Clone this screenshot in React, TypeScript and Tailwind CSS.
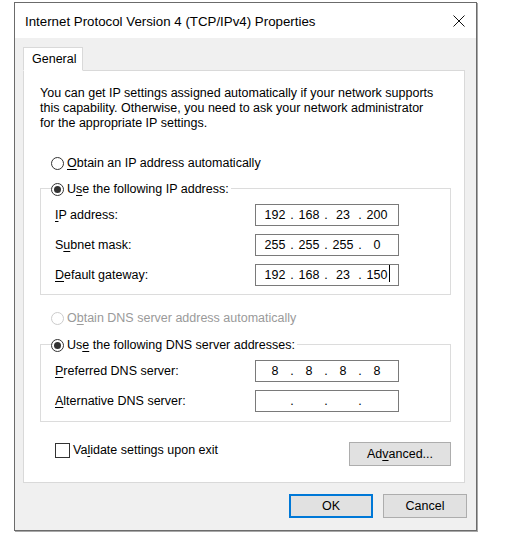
import React from 'react';

const font = { fontFamily: '"Liberation Sans", Arial, sans-serif' };

// Access-key letter, underlined like the Win32 dialog labels.
const U: React.FC<{ children: React.ReactNode }> = ({ children }) => <span className="underline underline-offset-[1.5px]">{children}</span>;

const Radio: React.FC<{ checked?: boolean; disabled?: boolean }> = ({ checked, disabled }) => (
  <span
    className={`flex h-[13px] w-[13px] shrink-0 items-center justify-center rounded-full border bg-white ${
      disabled ? 'border-[#cccccc]' : 'border-[#333333]'
    }`}
  >
    {checked && <span className="h-[7px] w-[7px] rounded-full bg-[#333333]" />}
  </span>
);

const IpBox: React.FC<{ parts: string[]; caret?: boolean }> = ({ parts, caret }) => (
  <div className="flex h-[22px] w-[144px] items-center border border-[#7a7a7a] bg-white pl-[5px] text-[12.5px] text-black">
    {parts.map((p, i) => (
      <React.Fragment key={i}>
        {i > 0 && <span className="w-[6px] text-center">.</span>}
        <span className="relative w-[28px] text-center">
          {p}
          {caret && i === 3 && <span className="absolute right-[1px] top-[-1px] h-[17px] w-px bg-black" />}
        </span>
      </React.Fragment>
    ))}
  </div>
);

const Field: React.FC<{ label: React.ReactNode; parts: string[]; caret?: boolean }> = ({ label, parts, caret }) => (
  <div className="flex h-[22px] items-center">
    <div className="w-[200px] text-[12.5px] text-black">{label}</div>
    <IpBox parts={parts} caret={caret} />
  </div>
);

const Group: React.FC<{ legend: React.ReactNode; children: React.ReactNode; className?: string }> = ({ legend, children, className }) => (
  <div className={`relative border border-[#dcdcdc] ${className ?? ''}`}>
    <div className="absolute left-[10px] top-[-10px] flex h-[20px] items-center gap-[3px] bg-white pr-[2px] text-[12.5px] text-black">
      <Radio checked />
      <span>{legend}</span>
    </div>
    <div className="flex flex-col gap-[8px] pl-[14px]">{children}</div>
  </div>
);

const Btn: React.FC<{ children: React.ReactNode; primary?: boolean; className?: string }> = ({ children, primary, className }) => (
  <div
    className={`flex h-[24px] items-center justify-center bg-[#e1e1e1] text-[12.5px] text-black ${
      primary ? 'border-2 border-[#0078d7]' : 'border border-[#adadad]'
    } ${className ?? ''}`}
  >
    {children}
  </div>
);

export default function App() {
  return (
    <div className="h-[559px] w-[516px] bg-white pt-[2px]" style={font}>
      <div className="ml-[14px] flex h-[529px] w-[463px] flex-col border border-[#6b6b6b] shadow-[1px_1px_0_#a8a8a8]">
        {/* title bar */}
        <div className="flex h-[35px] shrink-0 items-center justify-between bg-white pl-[10px] pr-[11px]">
          <span className="mt-[2px] text-[13.3px] text-black">Internet Protocol Version 4 (TCP/IPv4) Properties</span>
          <svg width="12" height="12" viewBox="0 0 12 12" className="mt-[1px]">
            <path d="M0.5 0.5 L11.5 11.5 M11.5 0.5 L0.5 11.5" stroke="#111" strokeWidth="1" fill="none" />
          </svg>
        </div>

        {/* body */}
        <div className="flex flex-1 flex-col bg-[#f0f0f0] pl-[8px] pr-[9px] pt-[9px]">
          <div className="relative z-10 -mb-px flex h-[24px] w-[60px] items-center border border-b-white border-[#d9d9d9] bg-white pl-[8px] text-[12.5px] text-black">
            General
          </div>
          <div className="h-[413px] w-[442px] border border-[#d9d9d9] bg-white pl-[16px] pr-[8px] pt-[15px]">
            <p className="whitespace-nowrap text-[12.5px] leading-[15px] text-black">
              You can get IP settings assigned automatically if your network supports
              <br />
              this capability. Otherwise, you need to ask your network administrator
              <br />
              for the appropriate IP settings.
            </p>

            <div className="ml-[11px] mt-[22px] flex h-[20px] items-center gap-[3px] text-[12.5px] text-black">
              <Radio />
              <span>
                <U>O</U>btain an IP address automatically
              </span>
            </div>

            <Group
              className="mr-[5px] mt-[15px] h-[107px] pt-[15px]"
              legend={
                <>
                  U<U>s</U>e the following IP address:
                </>
              }
            >
              <Field label={<><U>I</U>P address:</>} parts={['192', '168', '23', '200']} />
              <Field label={<>S<U>u</U>bnet mask:</>} parts={['255', '255', '255', '0']} />
              <Field label={<><U>D</U>efault gateway:</>} parts={['192', '168', '23', '150']} caret />
            </Group>

            <div className="ml-[11px] mt-[13px] flex h-[20px] items-center gap-[3px] text-[12.5px] text-[#9a9a9a]">
              <Radio disabled />
              <span>
                O<U>b</U>tain DNS server address automatically
              </span>
            </div>

            <Group
              className="mr-[5px] mt-[16px] h-[78px] pt-[15px]"
              legend={
                <>
                  Us<U>e</U> the following DNS server addresses:
                </>
              }
            >
              <Field label={<><U>P</U>referred DNS server:</>} parts={['8', '8', '8', '8']} />
              <Field label={<><U>A</U>lternative DNS server:</>} parts={['', '', '', '']} />
            </Group>

            <div className="mr-[5px] mt-[19px] flex items-start justify-between">
              <div className="ml-[15px] flex items-center gap-[3px] text-[12.5px] text-black">
                <span className="h-[15px] w-[15px] border border-[#333333] bg-white" />
                <span>
                  Va<U>l</U>idate settings upon exit
                </span>
              </div>
              <Btn className="mt-[1px] w-[102px]">
                Ad<U>v</U>anced...
              </Btn>
            </div>
          </div>

          <div className="mt-[11px] flex justify-end gap-[10px]">
            <Btn primary className="w-[84px]">OK</Btn>
            <Btn className="w-[84px]">Cancel</Btn>
          </div>
        </div>
      </div>
    </div>
  );
}
